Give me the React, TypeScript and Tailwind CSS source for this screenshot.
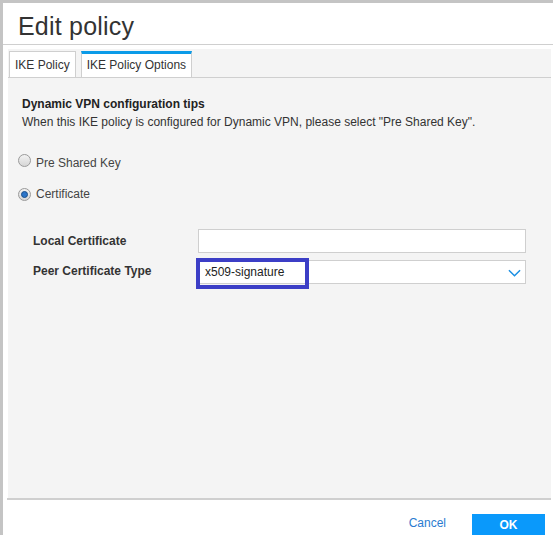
import React, { useState } from 'react';

const Radio: React.FC<{ checked: boolean }> = ({ checked }) => (
  <span className="relative inline-flex h-[13px] w-[13px] items-center justify-center rounded-full border border-[#9a9a9a] bg-gradient-to-b from-[#f2f2f2] to-[#d6d6d6]">
    {checked && <span className="h-[7px] w-[7px] rounded-full border border-[#1a4f8a] bg-[#2b74c8]" />}
  </span>
);

const ChevronDown: React.FC<{ className?: string }> = ({ className }) => (
  <svg className={className} viewBox="0 0 14 8" fill="none" stroke="currentColor">
    <path strokeWidth={1.6} d="M1 1l6 6 6-6" />
  </svg>
);

const App: React.FC = () => {
  const [auth, setAuth] = useState<'psk' | 'cert'>('cert');

  return (
    <div className="h-[535px] w-[553px] overflow-hidden bg-[#c4c4c4] pl-[3px] pt-[3px] font-['Liberation_Sans',Arial,sans-serif] text-[12px] text-[#333]">
      <div className="flex h-full flex-col bg-white">
        <header className="flex h-[42px] items-center border-b border-[#cfcfcf] pl-[15px] pt-[6px]">
          <h1 className="text-[25px] font-normal tracking-[0.2px] text-[#333]">Edit policy</h1>
        </header>

        <div className="ml-[5px] mr-[2px] mt-[4px] flex flex-1 flex-col bg-[#f4f4f4]">
          <div className="flex h-[29px] items-end gap-[5px] border-b border-[#cfcfcf] pl-[1px]">
            <button className="h-[26px] border border-b-0 border-[#cfcfcf] bg-white px-[5px] text-[12px] text-[#333]">
              IKE Policy
            </button>
            <button className="h-[26px] border border-b-0 border-t-[3px] border-[#cfcfcf] border-t-[#0a9be8] bg-white px-[5px] pb-[1px] text-[12px] text-[#333]">
              IKE Policy Options
            </button>
          </div>

          <div className="flex-1 pl-[14px]">
            <div className="mt-[18px] font-bold leading-[16px] text-[#222]">Dynamic VPN configuration tips</div>
            <div className="mt-[2px] leading-[16px] text-[#333]">
              When this IKE policy is configured for Dynamic VPN, please select "Pre Shared Key".
            </div>

            <label className="mt-[25px] flex h-[16px] cursor-pointer items-center gap-[5px] text-[#444]" onClick={() => setAuth('psk')}>
              <span className="-ml-[4px]"><Radio checked={auth === 'psk'} /></span>
              <span>Pre Shared Key</span>
            </label>
            <label className="mt-[15px] flex h-[16px] cursor-pointer items-center gap-[5px] text-[#444]" onClick={() => setAuth('cert')}>
              <span className="-ml-[4px]"><Radio checked={auth === 'cert'} /></span>
              <span>Certificate</span>
            </label>

            <div className="mt-[27px] pl-[11px]">
              <div className="flex h-[24px] items-center">
                <span className="w-[165px] font-bold text-[#333]">Local Certificate</span>
                <input className="h-[24px] w-[328px] border border-[#cfcfcf] bg-white px-[6px] text-[12px] outline-none" />
              </div>
              <div className="mt-[7px] flex h-[24px] items-center">
                <span className="-mt-[2px] w-[165px] font-bold text-[#333]">Peer Certificate Type</span>
                <div className="relative flex h-[24px] w-[328px] items-center border border-[#cfcfcf] bg-white pl-[6px]">
                  <span className="text-[#222]">x509-signature</span>
                  <ChevronDown className="absolute right-[4px] top-[8px] h-[8px] w-[13px] text-[#1a8fe3]" />
                  <span className="absolute -left-[3px] -top-[3px] h-[31px] w-[113px] border-[4px] border-[#3c3ec6]" />
                </div>
              </div>
            </div>
          </div>
        </div>

        <footer className="ml-[4px] mr-[2px] flex h-[37px] items-end justify-end gap-[26px] border-t-2 border-[#cfcfcf]">
          <button className="mb-[3px] text-[12px] text-[#2a7bd0]">Cancel</button>
          <button className="mr-[6px] h-[21px] w-[73px] bg-[#0a99fb] text-[12px] font-bold text-white">OK</button>
        </footer>
      </div>
    </div>
  );
};

export default App;
